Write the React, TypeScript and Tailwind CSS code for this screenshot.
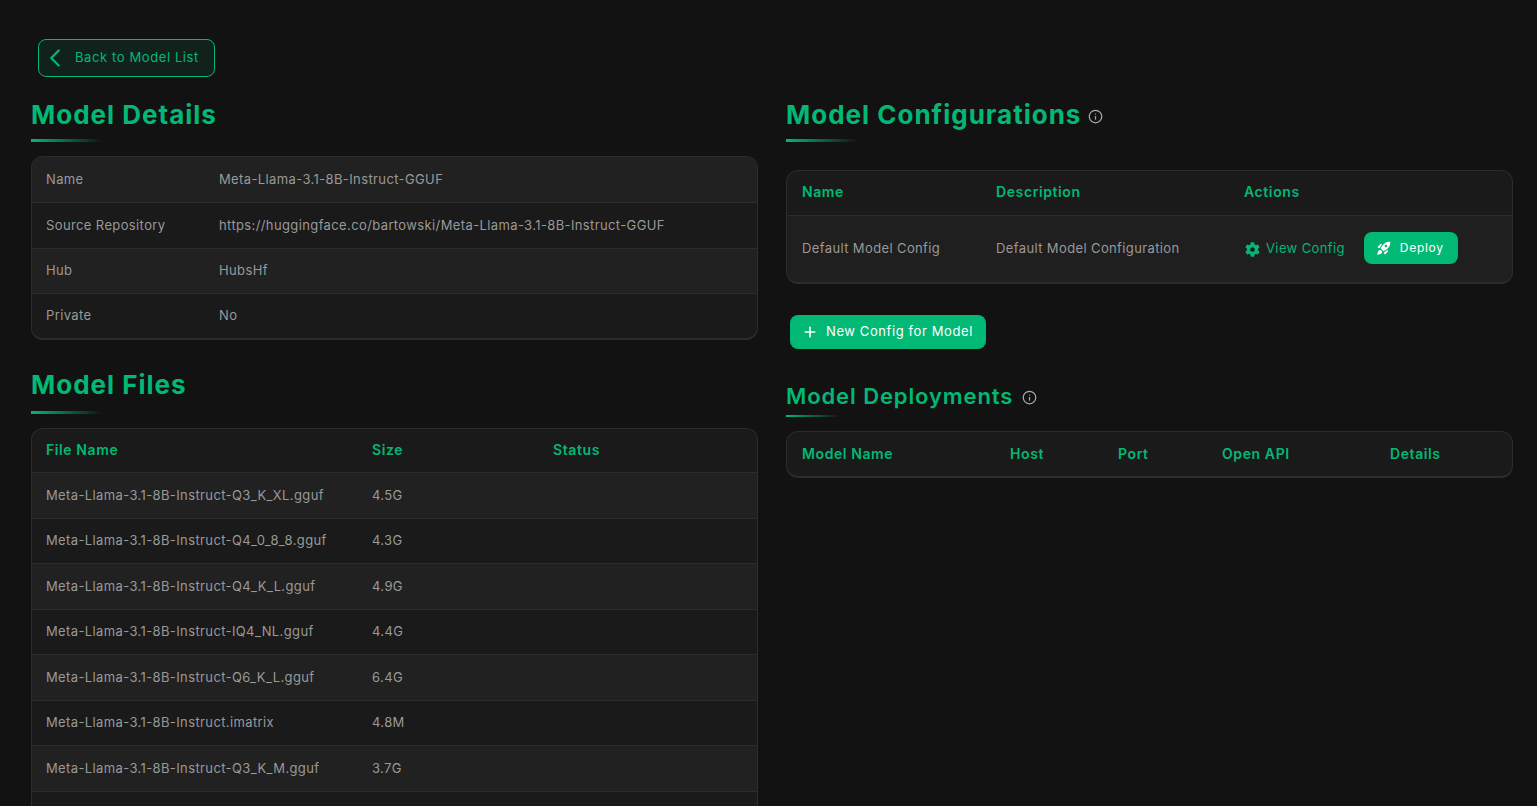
import { ChevronLeft, Info, Plus } from "lucide-react";
import { FaCog } from "react-icons/fa";
import { MdRocketLaunch } from "react-icons/md";

const detailRows = [
  ["Name", "Meta-Llama-3.1-8B-Instruct-GGUF"],
  ["Source Repository", "https://huggingface.co/bartowski/Meta-Llama-3.1-8B-Instruct-GGUF"],
  ["Hub", "HubsHf"],
  ["Private", "No"],
];

const fileRows = [
  ["Meta-Llama-3.1-8B-Instruct-Q3_K_XL.gguf", "4.5G"],
  ["Meta-Llama-3.1-8B-Instruct-Q4_0_8_8.gguf", "4.3G"],
  ["Meta-Llama-3.1-8B-Instruct-Q4_K_L.gguf", "4.9G"],
  ["Meta-Llama-3.1-8B-Instruct-IQ4_NL.gguf", "4.4G"],
  ["Meta-Llama-3.1-8B-Instruct-Q6_K_L.gguf", "6.4G"],
  ["Meta-Llama-3.1-8B-Instruct.imatrix", "4.8M"],
  ["Meta-Llama-3.1-8B-Instruct-Q3_K_M.gguf", "3.7G"],
  ["", ""],
];

const Underline = ({ small }: { small?: boolean }) => (
  <div
    className={
      small
        ? "w-[54px] h-[2px] bg-gradient-to-r from-[#02b875] to-transparent"
        : "w-[72px] h-[3px] bg-gradient-to-r from-[#02b875] to-transparent"
    }
  />
);

const Card = ({ children }: { children: React.ReactNode }) => (
  <div className="rounded-xl border border-b-2 border-[#2c2c2c] overflow-hidden bg-[#1a1a1a]">{children}</div>
);

export default function App() {
  return (
    <div className="h-screen overflow-hidden bg-[#121212] pl-[31px] pr-[24px] pt-[39px] font-['Inter',sans-serif] text-[13px] tracking-[0.38px] text-[#999999]">
      <button className="ml-[7px] flex items-center w-[177px] h-[38px] rounded-lg border border-[#02b875] bg-[#11221d] text-[#02b875] tracking-[0.6px]">
        <ChevronLeft size={30} strokeWidth={1.8} className="ml-[1px]" />
        <span className="ml-[5px]">Back to Model List</span>
      </button>

      <div className="grid grid-cols-2 gap-[28px] mt-[19px]">
        <div>
          <h1 className="text-[26px] leading-[38px] font-bold tracking-[1px] text-[#02b875]">Model Details</h1>
          <div className="mt-[5px] mb-[14px]">
            <Underline />
          </div>
          <Card>
            {detailRows.map(([label, value], i) => (
              <div
                key={label}
                className={`grid grid-cols-[173px_1fr] items-center h-[45.3px] pl-[14px] border-[#2c2c2c] ${
                  i > 0 ? "border-t" : ""
                } ${i % 2 === 0 ? "bg-[#212121]" : "bg-[#1a1a1a]"}`}
              >
                <span>{label}</span>
                <span>{value}</span>
              </div>
            ))}
          </Card>

          <h1 className="mt-[26px] text-[26px] leading-[38px] font-bold tracking-[1px] text-[#02b875]">Model Files</h1>
          <div className="mt-[7px] mb-[14px]">
            <Underline />
          </div>
          <Card>
            <div className="grid grid-cols-[326px_181px_1fr] items-center h-[43px] pl-[14px] pb-[2px] text-[14px] tracking-[0.6px] font-semibold text-[#02b875]">
              <span>File Name</span>
              <span>Size</span>
              <span>Status</span>
            </div>
            {fileRows.map(([name, size], i) => (
              <div
                key={i}
                className={`grid grid-cols-[326px_181px_1fr] items-center h-[45.5px] pl-[14px] border-t border-[#2c2c2c] ${
                  i % 2 === 0 ? "bg-[#212121]" : "bg-[#1a1a1a]"
                }`}
              >
                <span>{name}</span>
                <span>{size}</span>
                <span />
              </div>
            ))}
          </Card>
        </div>

        <div>
          <div className="flex items-center">
            <h1 className="text-[26px] leading-[38px] font-bold tracking-[1px] text-[#02b875]">Model Configurations</h1>
            <Info size={15} strokeWidth={2} className="ml-[7px] mt-[3px] text-[#aaaaaa]" />
          </div>
          <div className="mt-[5px] mb-[28px]">
            <Underline />
          </div>
          <Card>
            <div className="grid grid-cols-[194px_248px_1fr] items-center h-[44px] pl-[15px] pb-[3px] text-[14px] tracking-[0.6px] font-semibold text-[#02b875]">
              <span>Name</span>
              <span>Description</span>
              <span>Actions</span>
            </div>
            <div className="grid grid-cols-[194px_248px_1fr] items-center h-[67px] pl-[15px] border-t border-[#2c2c2c] bg-[#1f1f1f]">
              <span>Default Model Config</span>
              <span>Default Model Configuration</span>
              <div className="flex items-center">
                <a className="flex items-center gap-[6px] ml-[1px] text-[#02b875]">
                  <FaCog size={15} />
                  View Config
                </a>
                <button className="flex items-center gap-[8px] ml-[19px] mb-[2px] h-[32px] w-[94px] pl-[12px] rounded-lg bg-[#02b875] text-white text-[12px] tracking-[0.7px]">
                  <MdRocketLaunch size={16} />
                  Deploy
                </button>
              </div>
            </div>
          </Card>

          <button className="mt-[31px] ml-[4px] flex items-center gap-[8px] w-[196px] h-[34px] pl-[12px] rounded-lg bg-[#02b875] text-white tracking-[0.6px]">
            <Plus size={16} strokeWidth={2.5} />
            New Config for Model
          </button>

          <div className="flex items-center mt-[30px]">
            <h2 className="text-[22px] leading-[34px] font-semibold tracking-[0.9px] text-[#02b875]">Model Deployments</h2>
            <Info size={15} strokeWidth={2} className="ml-[9px] mt-[2px] text-[#aaaaaa]" />
          </div>
          <div className="mt-[2px] mb-[14px]">
            <Underline small />
          </div>
          <Card>
            <div className="grid grid-cols-[208px_108px_104px_168px_1fr] items-center h-[44px] pl-[15px] pb-[2px] text-[14px] tracking-[0.6px] font-semibold text-[#02b875]">
              <span>Model Name</span>
              <span>Host</span>
              <span>Port</span>
              <span>Open API</span>
              <span>Details</span>
            </div>
          </Card>
        </div>
      </div>
    </div>
  );
}
